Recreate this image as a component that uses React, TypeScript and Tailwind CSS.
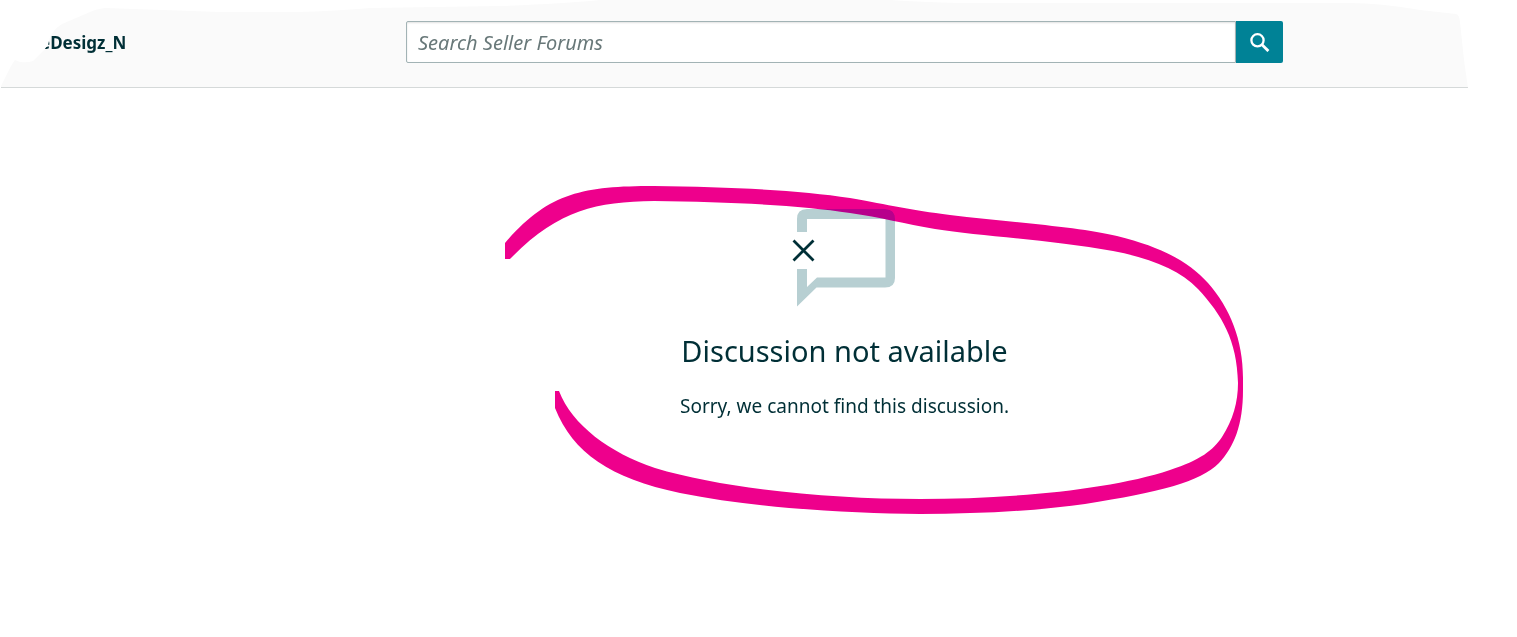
const Header = () => {
  return (
    <header className="relative flex items-center border-b border-[#d5d9d9] bg-[#fafafa] pt-[21px] pb-6">
      <div className="w-[406px] shrink-0 pt-0.5 pl-10 text-[17px] leading-6 font-bold">eDesigz_N</div>
      <form className="relative z-10 flex h-[42px] flex-1" role="search">
        <input
          type="search"
          aria-label="Search Seller Forums"
          placeholder="Search Seller Forums"
          className="min-w-0 flex-1 rounded-l-xs border border-[#a2b3b5] bg-white px-[11px] pt-0.5 text-xl shadow-[inset_0_1px_2px_rgba(0,0,0,0.12)] outline-none placeholder:text-[#687879] placeholder:italic"
        />
        <button
          type="button"
          aria-label="Search"
          className="flex w-[47px] items-center justify-center rounded-r-xs bg-[#008296]"
        >
          <svg width="20" height="20" viewBox="0 0 20 20" fill="none" stroke="#fff" aria-hidden="true">
            <circle cx="7.5" cy="8.3" r="6.1" strokeWidth="2.3" />
            <path d="M11.8 12.5 L18.4 19.1" strokeWidth="2.8" />
          </svg>
        </button>
      </form>
      <div className="w-[234px] shrink-0" />

      {/* Torn edge around the bar */}
      <svg
        className="pointer-events-none absolute top-0 left-0 h-[88px] w-full"
        viewBox="0 0 1517 88"
        preserveAspectRatio="none"
        fill="#fff"
        aria-hidden="true"
      >
        <path d="M0 0 H1517 V88 H1468 L1464 60 L1460 22 Q1459 14 1456 14 L1420 10 Q1380 3 1350 3 L960 3 Q920 2 890 0 H600 Q560 4 500 6 L370 8 Q320 12 290 12 L220 12 L105 8 Q96 9 90 12 L62 24 Q54 29 50 37 L48 45 L44 50 L33 61 Q27 63 20 62 L15 60 Q12 64 10 68 L1 86 V88 H0 Z" />
      </svg>
    </header>
  );
};

const EmptyIcon = () => {
  return (
    <svg width="107" height="98" viewBox="791 209 107 98" fill="none" aria-hidden="true">
      <path
        fill="#b7cfd2"
        d="M797 232 V219 Q797 209 807 209 H885 Q895 209 895 219 V278 Q895 287.500 885 287.500 H816.500 L797 306.500 V269 H807 V287 L817 277.500 H885.500 V219 H807 V232 Z"
      />
      <path d="M793.500 240.500 L813.500 260.500 M813.500 240.500 L793.500 260.500" stroke="#002f36" strokeWidth="2.800" />
    </svg>
  );
};

// Freehand marker around the message, drawn with a flat nib
const Marker = () => {
  return (
    <svg
      className="pointer-events-none absolute top-[92px] left-[94px] mix-blend-darken"
      width="750"
      height="340"
      viewBox="500 180 750 340"
      aria-hidden="true"
    >
      <path
        fill="#ee008c"
        d="M505 243 C548 193 582 186 654 186 C730 187 800 190 850 198 C890 205 910 210 950 215
          C1010 222 1080 227 1117 236 C1165 248 1190 263 1208 283 C1230 308 1243 340 1243 378
          V390 C1243 425 1234 447 1219 463 C1200 482 1160 492 1085 504 C1035 511 980 514 920 514
          C850 513 760 509 680 493 C610 478 573 453 555 408 V391 H559
          C572 425 610 453 655 468 C725 489 830 499 920 499 C1010 499 1110 490 1170 470
          C1201 460 1213 450 1222 437 C1233 420 1238 402 1238 383 C1237 340 1222 315 1198 289
          C1180 270 1150 258 1113 251 C1050 240 980 236 935 229 C905 224 880 217 850 213
          C800 205 730 202 654 201 C595 202 558 210 510 259 H505 Z"
      />
    </svg>
  );
};

const App = () => {
  return (
    <div className="min-h-screen bg-white font-['Noto_Sans','Open_Sans',sans-serif] text-[#002f36]">
      <Header />
      <main className="pr-[234px] pl-[406px]">
        <div className="relative flex flex-col items-center pt-[121px] text-center">
          <EmptyIcon />
          <h1 className="mt-6 text-[29px] leading-10">Discussion not available</h1>
          <p className="mt-5 text-[19px] leading-[30px]">Sorry, we cannot find this discussion.</p>
          <Marker />
        </div>
      </main>
    </div>
  );
};

export default App;
